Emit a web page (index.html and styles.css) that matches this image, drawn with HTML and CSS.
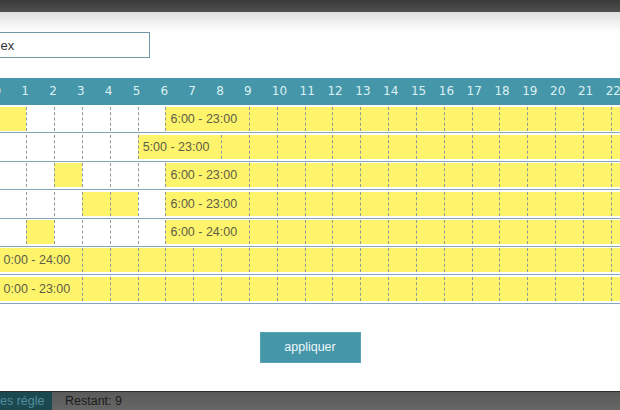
FILE: index.html
```html
<!DOCTYPE html>
<html lang="fr">

<head>
    <meta charset="UTF-8">
    <title>Plages horaires</title>
    <link rel="stylesheet" href="styles.css">
</head>

<body>
    <div class="topbar"></div>

    <!-- Fenêtre d'édition des plages -->
    <div class="modal">
        <input type="text" class="name-input" value="ex">

        <div class="schedule">
            <div class="hours" id="hours"></div>
            <div id="rows"></div>
        </div>

        <div class="actions">
            <button type="button" class="apply">appliquer</button>
        </div>
    </div>

    <div class="footer">
        <span class="tab">es régle</span>
        <span class="remaining">Restant: 9</span>
    </div>

    <script>
        var rows = [
            { start: 6, end: 23, extra: [0] },
            { start: 5, end: 23, extra: [] },
            { start: 6, end: 23, extra: [2] },
            { start: 6, end: 23, extra: [3, 4] },
            { start: 6, end: 24, extra: [1] },
            { start: 0, end: 24, extra: [] },
            { start: 0, end: 23, extra: [] }
        ];

        var hours = document.getElementById('hours');
        for (var h = 0; h < 24; h++) {
            var span = document.createElement('span');
            span.className = 'hour';
            span.innerText = h;
            hours.appendChild(span);
        }

        var container = document.getElementById('rows');
        rows.forEach(function(r) {
            var row = document.createElement('div');
            row.className = 'row';
            for (var h = 0; h < 24; h++) {
                var cell = document.createElement('div');
                if (h === r.start) {
                    cell.className = 'cell label';
                    cell.innerText = r.start + ':00 - ' + r.end + ':00';
                    h += 2;
                } else if ((h > r.start && h < r.end) || r.extra.indexOf(h) !== -1) {
                    cell.className = 'cell on';
                } else {
                    cell.className = 'cell';
                }
                row.appendChild(cell);
            }
            container.appendChild(row);
        });
    </script>
</body>

</html>
```

FILE: styles.css
```css
html, body {
    overflow: hidden;
}

body {
    font-family: "Liberation Sans", Arial, sans-serif;
    margin: 0;
    padding: 0;
    background-color: #4a4a4a;
}

.topbar {
    height: 12px;
    background: linear-gradient(#393939, #505050);
}

.modal {
    margin: 0 -20px;
    padding: 20px 18.5px 28px;
    background: linear-gradient(#e0e0e0, #fff 20px);
}

.name-input {
    display: block;
    width: 151.5px;
    height: 26px;
    box-sizing: border-box;
    border: 1px solid #6e98a6;
    padding: 0 0 0 1px;
    font-family: "Liberation Sans", Arial, sans-serif;
    font-size: 13px;
    color: #333;
    outline: none;
}

.schedule {
    margin-top: 20px;
    width: max-content;
}

.hours, .row {
    display: grid;
    grid-template-columns: repeat(24, 27.83px);
}

.hours {
    height: 27px;
    background-color: #4596a8;
}

.hour {
    font-family: "DejaVu Sans", Verdana, sans-serif;
    font-size: 12px;
    line-height: 27px;
    color: #dcf0f4;
    text-indent: -5px;
    white-space: nowrap;
}

.row {
    padding: 1.5px 0 1.9px;
    border-bottom: 1px solid #82a7b8;
}

.cell {
    height: 24px;
    box-sizing: border-box;
    border-left: 1px dashed #8e989c;
}

.cell.on, .cell.label {
    background-color: #fdf46b;
}

.cell.label {
    grid-column: span 3;
    padding-left: 4px;
    font-size: 12.5px;
    line-height: 24px;
    color: #5d5d48;
    white-space: nowrap;
}

.actions {
    display: flex;
    justify-content: center;
    margin-top: 28px;
}

.apply {
    width: 101px;
    height: 31px;
    border: 1px solid #5aa3b3;
    background-color: #4596a9;
    color: #eef7f9;
    font-family: "Liberation Sans", Arial, sans-serif;
    font-size: 12.5px;
    cursor: pointer;
}

.footer {
    display: flex;
    height: 18px;
    border-top: 1px solid #2e2e2e;
    background: linear-gradient(#5a5a5a, #666);
    font-size: 12.5px;
    line-height: 18px;
}

.tab {
    width: 52px;
    background-color: #1c4850;
    color: #4f8e9a;
    white-space: nowrap;
}

.remaining {
    margin-left: 13px;
    color: #1c1c1c;
}
```
